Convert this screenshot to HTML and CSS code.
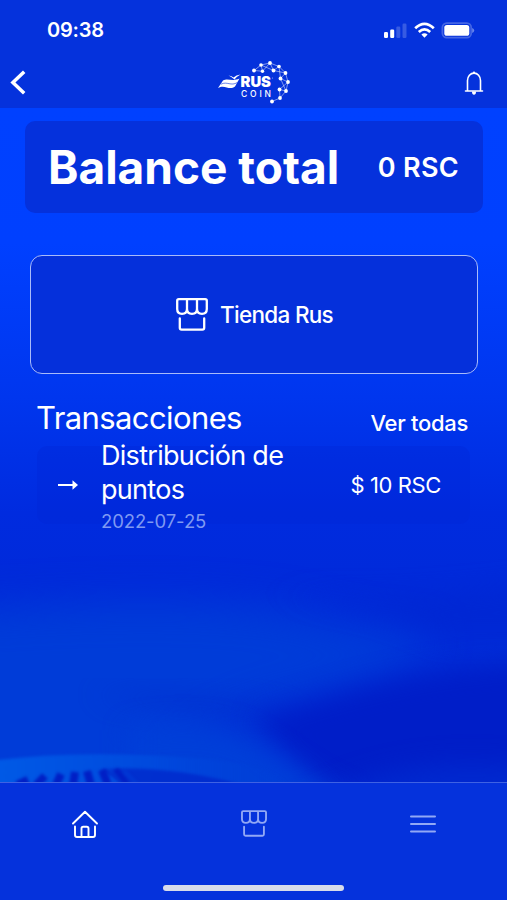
FILE: index.html
```html
<!DOCTYPE html>
<html lang="es">
<head>
<meta charset="utf-8">
<meta name="viewport" content="width=device-width, initial-scale=1">
<title>Rus Coin</title>
<link rel="stylesheet" href="styles.css">
</head>
<body>
<svg class="defs" aria-hidden="true">
  <symbol id="store" viewBox="0 0 32 33">
    <path d="M2.800 1.200H29.200Q30.800 1.200 30.800 2.800V11Q30.800 15.800 26 15.800Q21 15.800 21 11V1.200M21 11Q21 15.800 16 15.800Q11 15.800 11 11V1.200M11 11Q11 15.800 6 15.800Q1.200 15.800 1.200 11V2.800Q1.200 1.200 2.800 1.200M3.800 20.500V29.800Q3.800 31.600 5.600 31.600H26.400Q28.200 31.600 28.200 29.800V20.500"/>
  </symbol>
</svg>
<div class="app">
  <header class="header">
    <div class="status">
      <span class="time">09:38</span>
      <svg class="status-icons" width="92" height="18" viewBox="0 0 92 18">
        <g fill="#fff">
          <rect x="1" y="11" width="4" height="6" rx="1.2"/>
          <rect x="7.2" y="8.5" width="4" height="8.5" rx="1.2"/>
          <rect x="13.3" y="5.5" width="4" height="11.5" rx="1.2" opacity=".2"/>
          <rect x="19.5" y="2.5" width="4" height="14.5" rx="1.2" opacity=".2"/>
          <rect x="61.3" y="4" width="25" height="10.8" rx="2.6"/>
          <path d="M89.2 7v5q2-.7 2-2.5t-2-2.5" opacity=".4"/>
        </g>
        <rect x="59.4" y="2.2" width="28.8" height="14.4" rx="4.4" fill="none" stroke="#fff" stroke-opacity=".25" stroke-width="1.800"/>
        <g fill="none" stroke="#fff" stroke-width="2.700">
          <path d="M32.2 7.3Q41.5-1.7 50.8 7.3"/>
          <path d="M35.8 10.9Q41.5 5.7 47.2 10.9"/>
        </g>
        <path d="M38.4 13.6Q41.5 11 44.6 13.6L41.5 16.8Z" fill="#fff"/>
      </svg>
    </div>
    <div class="nav">
      <svg class="back" width="20" height="28" viewBox="0 0 20 28"><path d="M16.200 2.700 4.900 13.500 16.200 24.300" fill="none" stroke="#fff" stroke-width="3.500"/></svg>
      <svg class="logo" width="74" height="46" viewBox="0 0 74 46">
        <g fill="none" stroke="#fff" stroke-width=".65" opacity=".75">
          <path d="M37 10.5 44 5 53 3 62 6.5 68.5 13 71 22 69 31 63 38 55 41.500M37 10.500 45.500 11.200 53 3 56.500 10.500 62 6.500 63.500 18.500 68.500 13M44 5 45.500 11.200M44 5 56.500 10.500 68.500 13M63.500 18.500 71 22 62.500 29.500 69 31M63.500 18.500 69 31M62.500 29.500 63 38"/>
        </g>
        <g fill="#fff">
          <circle cx="37" cy="10.500" r="1.900"/><circle cx="44" cy="5" r="1.800"/><circle cx="45.500" cy="11.200" r="1.700"/><circle cx="53" cy="3" r="1.900"/><circle cx="56.500" cy="10.500" r="1.900"/><circle cx="62" cy="6.500" r="1.800"/><circle cx="68.500" cy="13" r="1.900"/><circle cx="63.500" cy="18.500" r="1.900"/><circle cx="71" cy="22" r="1.900"/><circle cx="62.500" cy="29.500" r="1.900"/><circle cx="69" cy="31" r="1.900"/><circle cx="63" cy="38" r="1.900"/><circle cx="55" cy="41.500" r="1.900"/>
          <path d="M6 20.500C11 17.500 15 22 22.500 18.500L18 26.500C12 31 8 24 1 28Z"/>
          <path d="M11.500 15.500Q15 16 16.500 17.500Q19 15 23.500 14.500Q19 17 17.500 19.500Q14 16.500 11.500 15.500Z"/>
        </g>
        <path d="M4 24.200C10 21 14 26.500 20.300 22.500" fill="none" stroke="#0532dc" stroke-width=".6"/>
        <text class="logo-rus" x="23.500" y="27" textLength="30.500" lengthAdjust="spacingAndGlyphs">RUS</text>
        <text class="logo-coin" x="24" y="36.500" textLength="30">COIN</text>
        <circle cx="55.500" cy="18" r=".6" fill="#fff" opacity=".6"/>
      </svg>
      <svg class="bell" width="20" height="26" viewBox="0 0 20 26">
        <path d="M3.500 20.800V10.500A6.500 7.400 0 0 1 16.500 10.500V20.800M1.500 21H18.500" fill="none" stroke="#fff" stroke-width="1.600" stroke-linecap="round"/>
        <path d="M8.400 3.200 10 1 11.600 3.200M8 21.500H12Q12 24.800 10 24.800T8 21.500" fill="#fff"/>
      </svg>
    </div>
  </header>

  <main class="main">
    <svg class="backdrop" width="507" height="674" viewBox="0 0 507 674" aria-hidden="true">
      <defs>
        <linearGradient id="base" x1="0" y1="0" x2="0" y2="1">
          <stop offset="0" stop-color="#0041ff"/>
          <stop offset=".2" stop-color="#0040ff"/>
          <stop offset=".43" stop-color="#0036ee"/>
          <stop offset=".6" stop-color="#002bdf"/>
          <stop offset=".7" stop-color="#002ada"/>
          <stop offset="1" stop-color="#0031d6"/>
        </linearGradient>
        <linearGradient id="glow" x1="0" y1="0" x2="1" y2="0">
          <stop offset="0" stop-color="#005ae6"/>
          <stop offset=".55" stop-color="#0049dd"/>
          <stop offset="1" stop-color="#0040d8" stop-opacity="0"/>
        </linearGradient>
        <filter id="soft" x="-30%" y="-50%" width="160%" height="200%" color-interpolation-filters="sRGB"><feGaussianBlur stdDeviation="20"/></filter>
        <filter id="mid" x="-30%" y="-60%" width="160%" height="220%" color-interpolation-filters="sRGB"><feGaussianBlur stdDeviation="13"/></filter>
        <filter id="fine" x="-30%" y="-60%" width="160%" height="220%" color-interpolation-filters="sRGB"><feGaussianBlur stdDeviation="1.500"/></filter>
      </defs>
      <rect width="507" height="674" fill="url(#base)"/>
      <path d="M-60 505Q200 485 300 508T435 528Q410 565 290 590T150 710L-60 710Z" fill="#003cd8" filter="url(#soft)"/>
      <path d="M240 482Q380 500 560 472V530H440Q380 495 240 482Z" fill="#0026d2" opacity=".7" filter="url(#mid)"/>
      <path d="M90 586Q190 583 265 600T250 608 90 586Z" fill="#002cce" opacity=".8" filter="url(#mid)"/>
      <path d="M255 612Q320 588 390 572T570 550V710H350Q290 650 255 612Z" fill="#001ec8" filter="url(#mid)"/>
      <path d="M130 622Q220 606 265 640T350 690V710H130Z" fill="#003fd8" filter="url(#mid)"/>
      <path d="M290 710Q390 640 540 662V710Z" fill="#0029cf" filter="url(#mid)"/>
      <path d="M-10 653Q70 642 180 649T290 684H-10Z" fill="url(#glow)" filter="url(#fine)"/>
      <path d="M100 662Q160 656 240 676H125Z" fill="#0024ca" opacity=".7" filter="url(#fine)"/>
      <g fill="none" stroke="#001fc5" stroke-width="8" filter="url(#fine)">
        <path d="M17 677 28 672M36 677 45 668M56 677 61 666M73 677 75 664M91 677 87 663M108 677 102 662M126 677 115 662"/>
      </g>
      <path d="M137 676 124 663M122 676 109 660" fill="none" stroke="#0045da" stroke-width="3" opacity=".5" filter="url(#fine)"/>
    </svg>

    <section class="balance">
      <h1 class="balance-title">Balance total</h1>
      <span class="balance-value">0 RSC</span>
    </section>

    <button class="shop">
      <svg class="shop-icon" width="32" height="33"><use href="#store"/></svg>
      <span class="shop-label">Tienda Rus</span>
    </button>

    <section class="transactions">
      <div class="section-head">
        <h2 class="section-title">Transacciones</h2>
        <a class="see-all">Ver todas</a>
      </div>
      <article class="row">
        <svg class="arrow" width="22" height="12" viewBox="0 0 22 12"><path d="M1 6H16" stroke="#fff" stroke-width="2"/><path d="M15.500 1.200 21 6 15.500 10.800Z" fill="#fff"/></svg>
        <div class="row-text">
          <p class="row-title">Distribución de<br>puntos</p>
          <time class="row-date">2022-07-25</time>
        </div>
        <span class="amount">$ 10 RSC</span>
      </article>
    </section>
  </main>

  <footer class="footer">
    <nav class="tabs">
      <svg class="tab" width="28" height="30" viewBox="0 0 28 30"><path d="M2 14.500 14 2.700 26 14.500M4 17.500V26Q4 28 6 28H22Q24 28 24 26V17.500M10.500 28V19.500Q10.500 17.800 12.200 17.800H15.800Q17.500 17.800 17.500 19.500V28" fill="none" stroke="#fff" stroke-width="1.900" stroke-linecap="round" stroke-linejoin="round"/></svg>
      <svg class="tab tab-store" width="26" height="27"><use href="#store"/></svg>
      <svg class="tab tab-menu" width="26" height="20" viewBox="0 0 26 20"><path d="M1 2.500H25M1 10H25M1 17.500H25" fill="none" stroke="#92a8f5" stroke-width="2" stroke-linecap="round"/></svg>
    </nav>
    <div class="home-bar"></div>
  </footer>
</div>
</body>
</html>
```
FILE: styles.css
```css
* { box-sizing: border-box; margin: 0; padding: 0; }
body { background: #0532dc; color: #fff; font-family: Inter, "Liberation Sans", sans-serif; }
svg { display: block; flex: none; }
.defs { display: none; }
.app { width: 507px; height: 900px; display: flex; flex-direction: column; overflow: hidden; }

.header { height: 108px; background: #0532dc; flex: none; }
.status { height: 58px; padding: 2px 32px 0 47px; display: flex; align-items: center; justify-content: space-between; }
.time { font-size: 20px; font-weight: 600; letter-spacing: -0.2px; }
.nav { height: 50px; padding: 0 23px 0 8px; display: grid; grid-template-columns: 209px 74px 1fr; align-items: center; }
.logo { margin-top: -1px; }
.bell { justify-self: end; }
.logo-rus { font: 900 14.5px Inter, sans-serif; fill: #fff; }
.logo-coin { font: 500 8.5px Inter, sans-serif; fill: #fff; }

.main { position: relative; z-index: 0; height: 674px; flex: none; overflow: hidden; padding: 13px 24px 0 25px; display: flex; flex-direction: column; }
.backdrop { position: absolute; inset: 0; z-index: -1; }

.balance { height: 92px; border-radius: 10px; background: #0531dc; display: flex; align-items: center; justify-content: space-between; padding: 0 24px; }
.balance-title { font-size: 46px; font-weight: 700; letter-spacing: 0; margin-left: -1px; white-space: nowrap; }
.balance-value { font-size: 27px; font-weight: 600; letter-spacing: 0.3px; white-space: nowrap; }

.shop { height: 119px; margin: 42px 5px 0; border: 1.5px solid #a9bbfa; border-radius: 12px; background: #0530db; color: #fff; font: inherit; display: flex; align-items: center; justify-content: center; gap: 12px; padding-left: 1px; }
.shop-icon, .tab-store { fill: none; stroke: #fff; stroke-width: 2.3; stroke-linecap: round; stroke-linejoin: round; }
.shop-label { font-size: 22.5px; font-weight: 500; letter-spacing: -0.7px; white-space: nowrap; margin-bottom: 1px; }

.transactions { padding: 24px 15px 0 12px; }
.section-head { height: 46px; display: flex; align-items: flex-start; justify-content: space-between; }
.section-title { font-size: 31px; font-weight: 400; line-height: 39px; letter-spacing: -0.6px; margin-left: -1px; }
.see-all { font-size: 22px; font-weight: 500; line-height: 28px; letter-spacing: -0.3px; margin-top: 11px; }
.row { height: 78px; margin: 2px -2px 0 0; border-radius: 10px; background: rgba(0, 38, 213, .3); display: grid; grid-template: 78px / 64px 1fr auto; align-items: center; padding-right: 29px; }
.arrow { margin-left: 20px; }
.row-title { font-size: 27px; line-height: 34px; letter-spacing: -0.7px; white-space: nowrap; }
.row-date { display: block; font-size: 18.5px; line-height: 28px; letter-spacing: -0.1px; color: #7f99f2; }
.row-text { margin-top: 3px; }
.amount { font-size: 22px; letter-spacing: -0.4px; white-space: nowrap; }

.footer { height: 118px; border-top: 1px solid #3f62e3; background: #0532dc; display: flex; flex-direction: column; align-items: center; }
.tabs { width: 507px; height: 81px; display: grid; grid-template-columns: repeat(3, 1fr); place-items: center; }
.home-bar { width: 181px; height: 6px; margin-top: 21px; border-radius: 3px; background: #d8dcea; }
.tab-store { stroke: #92a8f5; }
```
